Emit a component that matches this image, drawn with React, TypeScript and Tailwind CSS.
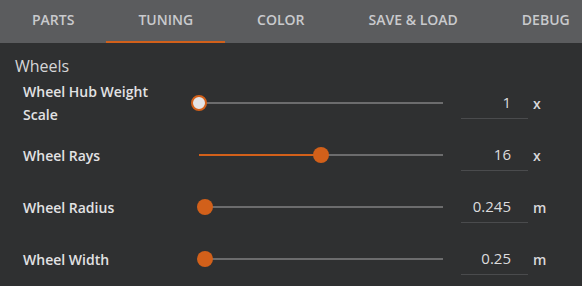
import React from "react";

const ORANGE = "bg-[#d2601a]";

type Row = { label: React.ReactNode; value: string; unit: string; pos: number; white?: boolean };

const rows: Row[] = [
  { label: <>Wheel Hub Weight<br />Scale</>, value: "1", unit: "x", pos: 0, white: true },
  { label: "Wheel Rays", value: "16", unit: "x", pos: 122 },
  { label: "Wheel Radius", value: "0.245", unit: "m", pos: 6 },
  { label: "Wheel Width", value: "0.25", unit: "m", pos: 6 },
];

function Slider({ pos, white }: { pos: number; white?: boolean }) {
  return (
    <div className="relative w-[260px] h-[18px]">
      <div className="absolute left-[8px] right-[8px] top-[8px] h-[2px] bg-[#6c6c6d]" />
      <div
        className={`absolute left-[8px] top-[8px] h-[2px] ${ORANGE}`}
        style={{ width: `${pos}px` }}
      />
      <div
        className={
          white
            ? "absolute top-[1px] w-[16px] h-[16px] rounded-full bg-[#e4e4e6] border-2 border-[#d2601a]"
            : `absolute top-[1px] w-[16px] h-[16px] rounded-full ${ORANGE}`
        }
        style={{ left: `${pos}px` }}
      />
    </div>
  );
}

export default function App() {
  const tabs = ["PARTS", "TUNING", "COLOR", "SAVE & LOAD", "DEBUG"];
  return (
    <div
      className="w-[582px] h-[286px] overflow-hidden bg-[#2f3031] flex flex-col"
      style={{ fontFamily: '"Open Sans", "Noto Sans", sans-serif' }}
    >
      <div className="h-[43px] bg-[#5b5c5e] flex shrink-0 whitespace-nowrap">
        {tabs.map((t) => (
          <div
            key={t}
            className={`h-[43px] px-8 flex items-center pb-[3px] border-b-2 text-[14px] font-semibold text-[#c9cacd] ${
              t === "TUNING" ? "border-[#d2601a]" : "border-transparent"
            }`}
          >
            {t}
          </div>
        ))}
      </div>
      <div className="pt-[13px] px-[15px]">
        <div className="text-[16px] leading-[21px] text-[#d6d6d8]">Wheels</div>
        <div className="flex flex-col">
          {rows.map((r, i) => (
            <div key={i} className="flex items-center pl-[8px] h-[52px]">
              <div className="w-[168px] text-[14px] leading-[23px] font-semibold text-[#e2e2e4]">{r.label}</div>
              <Slider pos={r.pos} white={r.white} />
              <div className="ml-[10px] w-[67px] h-[31px] border-b border-[#4a4b4d] flex items-center justify-end pr-[17px] text-[15px] text-[#dcdcde]">
                {r.value}
              </div>
              <div className="ml-[5px] text-[14px] font-semibold text-[#d8d8da]">{r.unit}</div>
            </div>
          ))}
        </div>
      </div>
    </div>
  );
}
